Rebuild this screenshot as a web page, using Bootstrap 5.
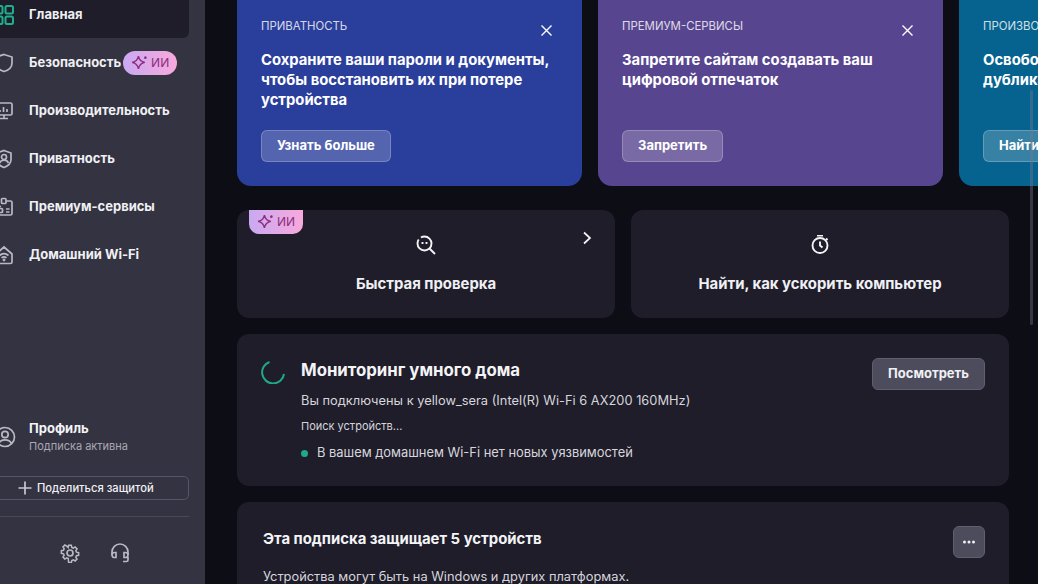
<!DOCTYPE html>
<html lang="ru">
<head>
  <meta charset="UTF-8" />
  <meta name="viewport" content="width=device-width, initial-scale=1" />
  <title>Главная</title>
  <link href="https://cdn.jsdelivr.net/npm/bootstrap@5.3.3/dist/css/bootstrap.min.css" rel="stylesheet" />
  <style>
    html, body { height: 584px; overflow: hidden; }
    body { background: #0d0d15; color: #f4f4f7; font-family: Inter, "Noto Sans", sans-serif; }
    svg { display: block; flex: none; fill: none; stroke: currentColor; stroke-width: 1.7; }

    .shell { height: 584px; }
    .side { width: 205px; flex: none; height: 584px; background: #343341; overflow: hidden; padding-right: 16px; }
    .side-nav { margin: -10px 0 0 -16px; }
    .side-item { height: 48px; padding: 2px 0 0 10px; gap: 15px; font-size: 13px; font-weight: 700; color: #f0f0f4; border-radius: 6px; white-space: nowrap; }
    .side-item svg { color: #b9b8c4; }
    .side-item.on { background: #1e1d29; }
    .side-item.on svg { color: #1fae8e; stroke-width: 2; }
    .ai-pill { width: 54px; height: 24px; margin-left: -13px; border-radius: 12px; background: linear-gradient(90deg, #c9a9f2, #f8a9dc); color: #8a2e80; font-size: 12px; font-weight: 400; gap: 3px; }
    .side-item .ai-pill svg { color: #8a2e80; stroke-width: 1.3; }
    .side-foot { margin-left: -16px; }
    .profile { padding-left: 10px; gap: 13px; margin-bottom: 21px; }
    .profile svg { color: #b9b8c4; }
    .profile-name { font-size: 13px; font-weight: 700; line-height: 18px; }
    .profile-sub { font-size: 11px; color: #a9a8b5; line-height: 18px; }
    .share-btn { width: 100%; height: 24px; padding: 0 0 0 33px; gap: 5px; font-size: 11.2px; font-weight: 500; color: #f0f0f4; background: transparent; border: 1px solid #55546a; border-radius: 5px; }
    .share-btn svg { color: #c9c8d2; }
    .side-rule { margin: 16px 0 0; border-top: 1px solid #4a4959; opacity: 1; }
    .side-tools { height: 67px; padding: 5px 0 0 76px; gap: 30px; color: #b9b8c4; }

    .main { flex: 1; min-width: 0; height: 584px; overflow: hidden; padding: 0 29px 0 32px; }
    .promo-row { margin-top: -20px; gap: 16px; width: 900px; }
    .promo { width: 345px; height: 206px; flex: none; border-radius: 14px; padding: 36px 24px 24px; color: #fff; }
    .promo-blue { background: #2a3e9b; }
    .promo-violet { background: #58458f; }
    .promo-teal { background: #06628e; }
    .promo-tag { font-size: 11.4px; line-height: 20px; text-transform: uppercase; opacity: .8; }
    .promo-close { top: 45px; right: 30px; color: #fff; background: none; border: 0; padding: 0; }
    .promo-close svg { stroke-width: 1.4; }
    .promo-text { font-size: 14.8px; font-weight: 700; line-height: 20px; margin: 14px 0 0; height: 60px; white-space: nowrap; }
    .promo-btn { height: 32px; padding: 0 15px; margin-top: 20px; font-size: 13px; font-weight: 700; color: #fff; background: rgba(255,255,255,.2); border: 1px solid rgba(255,255,255,.22); border-radius: 6px; }

    .panel { background: #1e1d29; border-radius: 12px; }
    .quick-row { margin-top: 24px; gap: 16px; }
    .quick { flex: 1; height: 108px; padding-top: 25px; gap: 19px; }
    .quick-title { font-size: 14.9px; font-weight: 700; line-height: 20px; color: #f0f0f4; }
    .quick-ai { top: 0; left: 12px; width: 54px; height: 24px; border-radius: 0 0 10px 10px; background: linear-gradient(90deg, #c9a9f2, #f8a9dc); color: #8a2e80; font-size: 12px; gap: 3px; }
    .quick-ai svg { stroke-width: 1.3; }
    .quick-arrow { top: 20px; right: 20px; }
    .quick-icon { stroke-width: 1.9; }

    .monitor { margin-top: 16px; height: 152px; padding: 24px; gap: 16px; }
    .spin-ring { width: 24px; height: 24px; margin-top: 2px; color: #1fa98a; stroke-width: 2; }
    .monitor-title { font-size: 16.8px; font-weight: 700; line-height: 24px; }
    .monitor-line { font-size: 12.85px; line-height: 20px; color: #d6d5dc; margin-top: 9px; }
    .monitor-small { font-size: 11px; line-height: 16px; color: #d6d5dc; margin-top: 7px; }
    .monitor-status { font-size: 12.9px; line-height: 20px; color: #d6d5dc; margin-top: 9px; gap: 9px; }
    .status-dot { width: 7px; height: 7px; border-radius: 50%; background: #1fa98a; }
    .grey-btn { height: 32px; padding: 0 15px; font-size: 13px; font-weight: 700; color: #f0f0f4; background: #4c4c5c; border: 1px solid #5f5f70; border-radius: 6px; }

    .subs { margin-top: 16px; height: 120px; padding: 24px 24px 0 26px; }
    .subs-title { font-size: 14.9px; font-weight: 700; line-height: 26px; }
    .subs-text { font-size: 12.85px; line-height: 20px; color: #d6d5dc; margin-top: 9px; }
    .dots-btn { width: 32px; height: 32px; padding: 0; color: #f0f0f4; background: #4c4c5c; border: 1px solid #5f5f70; border-radius: 6px; }
    .dots-icon { fill: currentColor; stroke: none; }

    .scroll-thumb { top: 90px; right: 5px; width: 3px; height: 235px; background: rgba(120,120,140,.4); border-radius: 2px; }
  </style>
</head>
<body>

<div class="shell d-flex position-relative">

  <!-- Sidebar -->
  <aside class="side d-flex flex-column justify-content-between">
    <nav class="side-nav">
      <div class="side-item on d-flex align-items-center">
        <svg width="20" height="20" viewBox="0 0 20 20"><rect x="1" y="1" width="7.500" height="7.500" rx="1.500"/><rect x="11.500" y="1" width="7.500" height="7.500" rx="1.500"/><rect x="1" y="11.500" width="7.500" height="7.500" rx="1.500"/><rect x="11.500" y="11.500" width="7.500" height="7.500" rx="1.500"/></svg>
        <span>Главная</span>
      </div>
      <div class="side-item d-flex align-items-center">
        <svg width="20" height="20" viewBox="0 0 20 20"><path d="M10 1.500l8 2.500v6c0 4.500-3.500 7.200-8 8.500-4.500-1.300-8-4-8-8.500V4z"/></svg>
        <span>Безопасность</span>
        <span class="ai-pill d-flex align-items-center justify-content-center">
          <svg width="17" height="17" viewBox="0 0 16 16"><path d="M7 1c.7 3.600 2.400 5.300 6 6-3.600.7-5.300 2.400-6 6-.7-3.600-2.400-5.300-6-6 3.600-.7 5.300-2.400 6-6z"/><circle cx="13.500" cy="2.500" r=".6"/></svg>
          ИИ
        </span>
      </div>
      <div class="side-item d-flex align-items-center">
        <svg width="20" height="20" viewBox="0 0 20 20"><rect x="1" y="2" width="17" height="12" rx="1.500"/><path d="M6 17.500h8M10 14v3.500M6 11V9M9.500 11V6M13 11V8"/></svg>
        <span>Производительность</span>
      </div>
      <div class="side-item d-flex align-items-center">
        <svg width="20" height="20" viewBox="0 0 20 20"><path d="M10 1.500l7 2.500v6.500c0 4-3 6.500-7 8-4-1.500-7-4-7-8V4z"/><circle cx="10" cy="8" r="2.500"/><path d="M5.500 14c1-2 2.500-2.800 4.500-2.800s3.500.8 4.500 2.800"/></svg>
        <span>Приватность</span>
      </div>
      <div class="side-item d-flex align-items-center">
        <svg width="20" height="20" viewBox="0 0 20 20"><path d="M12 4h4.500c1 0 1.500.5 1.500 1.500v11c0 1-.5 1.500-1.500 1.500h-13C2.500 18 2 17.500 2 16.500V11c0-1 .5-1.500 1.500-1.500H7"/><rect x="7.500" y="1.500" width="4.500" height="5" rx="1"/><rect x="4" y="11.500" width="4.500" height="4" rx=".8"/><path d="M12 12h3.500M12 15h3.500"/></svg>
        <span>Премиум-сервисы</span>
      </div>
      <div class="side-item d-flex align-items-center">
        <svg width="20" height="20" viewBox="0 0 20 20"><path d="M2 9l8-7 8 7v8c0 1-.5 1.500-1.500 1.500h-13C2.500 18.500 2 18 2 17z"/><path d="M5.500 10.500c2.700-2.300 6.300-2.300 9 0M7.500 12.800c1.500-1.200 3.500-1.200 5 0"/><circle cx="10" cy="15" r=".6"/></svg>
        <span>Домашний Wi-Fi</span>
      </div>
    </nav>

    <div class="side-foot">
      <div class="profile d-flex align-items-center">
        <svg width="22" height="22" viewBox="0 0 22 22"><circle cx="11" cy="11" r="9.500"/><circle cx="11" cy="8.500" r="3.200"/><path d="M4.500 17.500c1.300-2.500 3.500-3.600 6.500-3.600s5.200 1.100 6.500 3.600"/></svg>
        <div>
          <div class="profile-name">Профиль</div>
          <div class="profile-sub">Подписка активна</div>
        </div>
      </div>
      <button type="button" class="share-btn btn d-flex align-items-center">
        <svg width="14" height="14" viewBox="0 0 14 14"><path d="M7 0.500v13M.5 7h13"/></svg>
        Поделиться защитой
      </button>
      <hr class="side-rule" />
      <div class="side-tools d-flex align-items-center">
        <svg width="20" height="20" viewBox="0 0 20 20"><circle cx="10" cy="10" r="3"/><path d="M8.500 1.500h3l.5 2.400 1.600.7 2.100-1.300 2.100 2.100-1.300 2.100.7 1.600 2.400.5v3l-2.400.5-.7 1.600 1.300 2.100-2.100 2.100-2.100-1.300-1.600.7-.5 2.400h-3L8 16.100l-1.600-.7-2.100 1.300-2.100-2.100 1.300-2.100-.7-1.600-2.400-.5v-3l2.400-.5.7-1.600-1.300-2.100 2.100-2.100 2.100 1.300L8 3.900z" transform="translate(1 1) scale(.9)"/></svg>
        <svg width="20" height="20" viewBox="0 0 20 20"><path d="M2 12V9a8 8 0 0 1 16 0v3"/><path d="M2 12c0-1.500 1-2.500 2.500-2.500H6v5H4.500C3 14.500 2 13.500 2 12zM18 12c0-1.500-1-2.500-2.500-2.500H14v5h1.500c1.500 0 2.500-1 2.500-2.500zM18 14v3c0 1-.5 1.500-1.500 1.500H13"/></svg>
      </div>
    </div>
  </aside>

  <!-- Main -->
  <main class="main">
    <div class="promo-row d-flex">
      <div class="promo promo-blue position-relative">
        <div class="promo-tag">Приватность</div>
        <button type="button" class="promo-close position-absolute" aria-label="Закрыть"><svg width="11" height="11" viewBox="0 0 11 11"><path d="M.5.500l10 10M10.500.500l-10 10"/></svg></button>
        <p class="promo-text">Сохраните ваши пароли и документы,<br>чтобы восстановить их при потере<br>устройства</p>
        <button type="button" class="promo-btn btn d-inline-flex align-items-center">Узнать больше</button>
      </div>
      <div class="promo promo-violet position-relative">
        <div class="promo-tag">Премиум-сервисы</div>
        <button type="button" class="promo-close position-absolute" aria-label="Закрыть"><svg width="11" height="11" viewBox="0 0 11 11"><path d="M.5.500l10 10M10.500.500l-10 10"/></svg></button>
        <p class="promo-text">Запретите сайтам создавать ваш<br>цифровой отпечаток</p>
        <button type="button" class="promo-btn btn d-inline-flex align-items-center">Запретить</button>
      </div>
      <div class="promo promo-teal position-relative">
        <div class="promo-tag">Производительность</div>
        <p class="promo-text">Освободите место, удалив<br>дубликаты файлов</p>
        <button type="button" class="promo-btn btn d-inline-flex align-items-center">Найти</button>
      </div>
    </div>

    <div class="quick-row d-flex">
      <div class="quick panel position-relative d-flex flex-column align-items-center">
        <span class="quick-ai position-absolute d-flex align-items-center justify-content-center">
          <svg width="17" height="17" viewBox="0 0 16 16"><path d="M7 1c.7 3.600 2.400 5.300 6 6-3.600.7-5.300 2.400-6 6-.7-3.600-2.400-5.300-6-6 3.600-.7 5.300-2.400 6-6z"/><circle cx="13.500" cy="2.500" r=".6"/></svg>
          ИИ
        </span>
        <svg class="quick-icon" width="20" height="20" viewBox="0 0 20 20"><circle cx="8.500" cy="8.500" r="7" stroke-dasharray="26 3 15 0"/><path d="M13.500 13.500l5.500 5.500M6.500 7v2M10.500 7v2"/></svg>
        <div class="quick-title">Быстрая проверка</div>
        <svg class="quick-arrow position-absolute" width="16" height="16" viewBox="0 0 16 16"><path d="M5 2.500L11 8l-6 5.500"/></svg>
      </div>
      <div class="quick panel d-flex flex-column align-items-center">
        <svg class="quick-icon" width="20" height="20" viewBox="0 1 20 20"><circle cx="10" cy="11.500" r="7.500"/><path d="M7 1.500h6M10 7.500v4l2.500 2M16 4.500l1.500 1.500"/></svg>
        <div class="quick-title">Найти, как ускорить компьютер</div>
      </div>
    </div>

    <div class="monitor panel d-flex">
      <svg class="spin-ring" width="24" height="24" viewBox="0 0 24 24"><path d="M8.500 2A11 11 0 1 0 23 14"/></svg>
      <div class="flex-grow-1">
        <div class="monitor-title">Мониторинг умного дома</div>
        <div class="monitor-line">Вы подключены к yellow_sera (Intel(R) Wi-Fi 6 AX200 160MHz)</div>
        <div class="monitor-small">Поиск устройств...</div>
        <div class="monitor-status d-flex align-items-center"><span class="status-dot"></span>В вашем домашнем Wi-Fi нет новых уязвимостей</div>
      </div>
      <div><button type="button" class="grey-btn btn d-inline-flex align-items-center">Посмотреть</button></div>
    </div>

    <div class="subs panel">
      <div class="d-flex justify-content-between align-items-start">
        <div class="subs-title">Эта подписка защищает 5 устройств</div>
        <button type="button" class="dots-btn btn d-flex align-items-center justify-content-center" aria-label="Ещё">
          <svg class="dots-icon" width="14" height="4" viewBox="0 0 14 4"><circle cx="2.500" cy="2" r="1.500"/><circle cx="7" cy="2" r="1.500"/><circle cx="11.500" cy="2" r="1.500"/></svg>
        </button>
      </div>
      <div class="subs-text">Устройства могут быть на Windows и других платформах.</div>
    </div>
  </main>

  <div class="scroll-thumb position-absolute"></div>
</div>

<script src="https://cdn.jsdelivr.net/npm/bootstrap@5.3.3/dist/js/bootstrap.bundle.min.js"></script>
</body>
</html>
